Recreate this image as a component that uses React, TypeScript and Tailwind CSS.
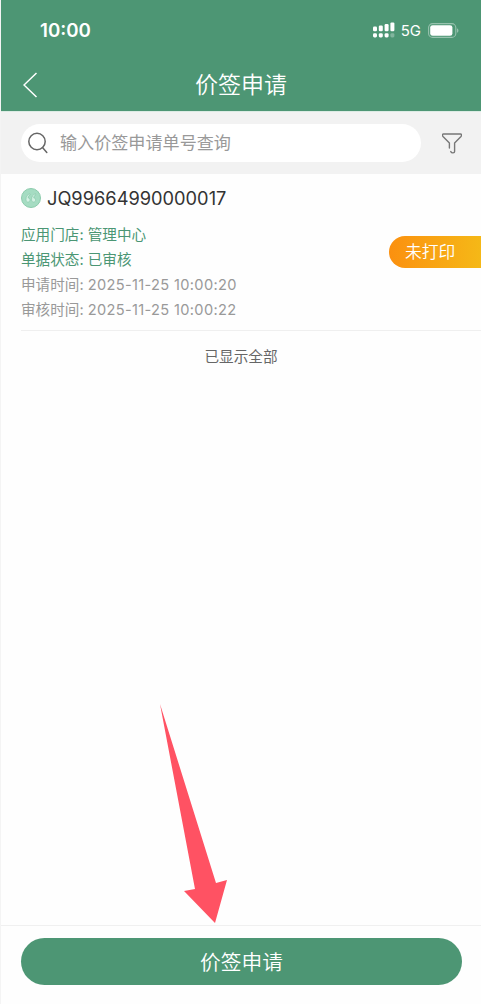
import { useState } from "react";

type PriceTagRequest = {
  id: string;
  store: string;
  status: string;
  appliedAt: string;
  reviewedAt: string;
  printLabel: string;
};

const requests: PriceTagRequest[] = [
  {
    id: "JQ99664990000017",
    store: "管理中心",
    status: "已审核",
    appliedAt: "2025-11-25 10:00:20",
    reviewedAt: "2025-11-25 10:00:22",
    printLabel: "未打印",
  },
];

function SignalIcon() {
  return (
    <svg width="22" height="16" viewBox="0 0 22 16" fill="#fff">
      <rect x="0" y="4.6" width="4" height="4.6" rx="1.2" />
      <rect x="5.8" y="3.6" width="4" height="5.6" rx="1.2" />
      <rect x="11.6" y="2" width="4" height="7.2" rx="1.2" />
      <rect x="17.4" y="0.4" width="4" height="8.8" rx="1.2" />
      <rect x="0" y="11.2" width="4" height="4.2" rx="1.4" />
      <rect x="5.8" y="11.2" width="4" height="4.2" rx="1.4" />
      <rect x="11.6" y="11.2" width="4" height="4.2" rx="1.4" />
      <rect x="17.4" y="11.2" width="4" height="4.2" rx="1.4" opacity="0.3" />
    </svg>
  );
}

function BatteryIcon() {
  return (
    <svg width="32" height="15" viewBox="0 0 32 15" fill="none">
      <rect x="0.6" y="0.6" width="27.2" height="13.8" rx="4" stroke="#fff" strokeOpacity="0.42" strokeWidth="1.1" />
      <rect x="2.2" y="2.2" width="22.2" height="10.6" rx="2.4" fill="#fff" />
      <path d="M29.2 5.2c1.6.8 1.6 3.8 0 4.6z" fill="#fff" fillOpacity="0.5" />
    </svg>
  );
}

function QuoteIcon() {
  return (
    <svg width="20" height="20" viewBox="0 0 20 20">
      <circle cx="10" cy="10" r="9.5" fill="#a5dcc2" stroke="#8ccbac" />
      <g fill="#d3f1e3" stroke="#7cbf9e" strokeWidth="0.5" strokeLinejoin="round">
        <path d="M9 5.8C6.4 6.4 5 8.6 5 11.4c0 1.7.8 2.6 2 2.6s2-.9 2-2.1-.8-2-1.9-2c0-1.4.8-2.5 2.1-3.1z" />
        <path d="M14.6 5.8c-2.6.6-4 2.8-4 5.6 0 1.7.8 2.6 2 2.6s2-.9 2-2.1-.8-2-1.9-2c0-1.4.8-2.5 2.1-3.1z" />
      </g>
    </svg>
  );
}

function RequestItem({ request }: { request: PriceTagRequest }) {
  return (
    <li className="ml-5 h-[157px] border-b border-[#efefef] pt-3">
      <div className="flex h-6 items-center gap-[6px]">
        <QuoteIcon />
        <span className="text-[18.25px] leading-6 text-[#333]">{request.id}</span>
      </div>
      <div className="mt-[13px] flex items-start justify-between">
        <div className="text-[14.6px] leading-[25px] whitespace-nowrap text-[#999]">
          <p className="text-[#4b9674]">应用门店: {request.store}</p>
          <p className="text-[#4b9674]">单据状态: {request.status}</p>
          <p>
            申请时间: <span className="tracking-[0.34px]">{request.appliedAt}</span>
          </p>
          <p>
            审核时间: <span className="tracking-[0.34px]">{request.reviewedAt}</span>
          </p>
        </div>
        <span className="mt-[13px] h-8 w-[92px] rounded-l-full bg-linear-to-r from-[#fb900f] to-[#f5b817] pl-4 text-[16.8px] leading-[33px] font-[350] text-white">
          {request.printLabel}
        </span>
      </div>
    </li>
  );
}

export default function App() {
  const [query, setQuery] = useState("");
  const visible = requests.filter((request) => request.id.includes(query.trim()));

  return (
    <div className="relative flex h-[1004px] w-[481px] flex-col overflow-hidden border-l border-[#f4f4f4] bg-[#fefefe] font-['Inter','Noto_Sans_CJK_SC',sans-serif]">
      <header className="h-[111px] shrink-0 bg-[#4d9674] text-white">
        <div className="flex h-[60px] items-center justify-between pr-[21px] pl-[39px]">
          <span className="pt-0.5 text-[18.7px] leading-6 font-semibold">10:00</span>
          <div className="flex items-center">
            <SignalIcon />
            <span className="ml-[6px] pt-px text-[15px] leading-5">5G</span>
            <span className="ml-[7px]">
              <BatteryIcon />
            </span>
          </div>
        </div>
        <div className="grid h-[50px] grid-cols-[60px_1fr_60px] items-center">
          <button type="button" aria-label="返回" className="pl-[22px]">
            <svg width="15" height="26" viewBox="0 0 15 26" fill="none" stroke="#fff" strokeWidth="1.5">
              <path d="M13.5 1 1 13l12.5 12" />
            </svg>
          </button>
          <h1 className="text-center text-[23px] leading-8 font-[350]">价签申请</h1>
        </div>
      </header>

      <div className="flex h-[63px] shrink-0 items-center border-t border-[#dcebe4] bg-[#f2f2f2] pl-5">
        <label className="flex h-[38px] w-[400px] items-center rounded-full bg-white pl-[7px]">
          <svg width="20" height="22" viewBox="0 0 20 22" fill="none" stroke="#666" strokeWidth="1.5">
            <circle cx="9" cy="9.5" r="8.2" />
            <path d="m14.5 15.5 4.3 5" strokeLinecap="round" />
          </svg>
          <input
            type="text"
            value={query}
            onChange={(event) => setQuery(event.target.value)}
            placeholder="输入价签申请单号查询"
            className="ml-3 w-[320px] text-[17.1px] leading-6 outline-none placeholder:text-[#999]"
          />
        </label>
        <button type="button" aria-label="筛选" className="ml-[21px]">
          <svg
            width="20"
            height="21"
            viewBox="0 0 20 21"
            fill="none"
            stroke="#777"
            strokeWidth="1.4"
            strokeLinecap="round"
            strokeLinejoin="round"
          >
            <path d="M7.4 15v-5L1 3.5C0 2.2.2 1 1.5 1h17c1.2 0 1.4 1.3.5 2.4L12.6 10v8.4c0 1.8-2.9 2-3.8.2" />
          </svg>
        </button>
      </div>

      <main className="flex-1">
        <ul>
          {visible.map((request) => (
            <RequestItem key={request.id} request={request} />
          ))}
        </ul>
        <p className="mt-[14px] text-center text-[14.6px] leading-[25px] text-[#666]">已显示全部</p>
      </main>

      <footer className="h-[79px] shrink-0 border-t border-[#f0f0f0] px-5 pt-3">
        <button
          type="button"
          className="block h-[47px] w-[441px] rounded-full bg-[#4d9674] text-[20.7px] leading-[49px] font-[350] text-white"
        >
          价签申请
        </button>
      </footer>

      {/* pointer towards the submit button */}
      <svg
        className="pointer-events-none absolute top-[704px] left-[159px]"
        width="68"
        height="220"
        viewBox="0 0 68 220"
        fill="#ff5263"
      >
        <path d="M0 0 56 179l11-3-12 43-31-32 11-2z" />
      </svg>
    </div>
  );
}
